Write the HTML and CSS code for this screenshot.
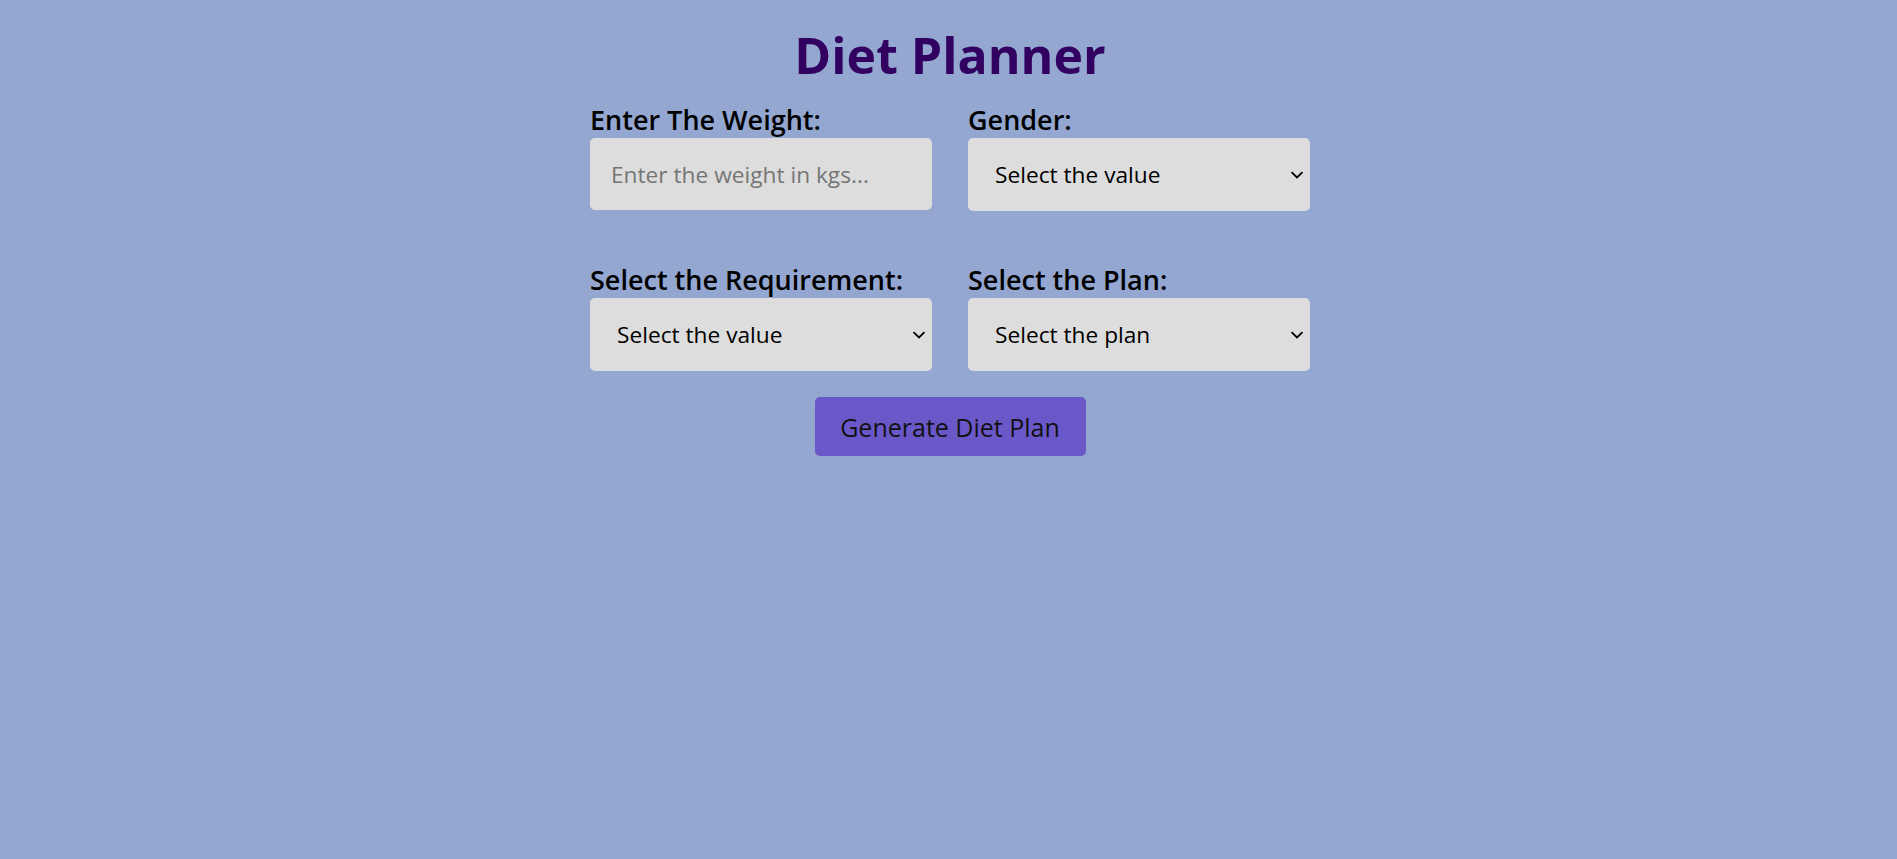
FILE: index.html
```html
<!DOCTYPE html>
<html lang="en">
<head>
<meta charset="utf-8">
<title>Diet Planner</title>
<link rel="stylesheet" href="styles.css">
</head>
<body>
<main class="page">
  <h1 class="title">Diet Planner</h1>
  <form class="form">
    <div class="field">
      <label class="label" for="weight">Enter The Weight:</label>
      <input class="control input" id="weight" type="text" placeholder="Enter the weight in kgs...">
    </div>
    <div class="field">
      <label class="label" for="gender">Gender:</label>
      <div class="select-wrap">
        <select class="control select" id="gender">
          <option>Select the value</option>
        </select>
        <svg class="chevron" width="14" height="8" viewBox="0 0 14 8"><path d="M1.5 1.2 L7 6.5 L12.5 1.2" fill="none" stroke="#000" stroke-width="1.8"/></svg>
      </div>
    </div>
    <div class="field">
      <label class="label" for="req">Select the Requirement:</label>
      <div class="select-wrap">
        <select class="control select" id="req">
          <option>Select the value</option>
        </select>
        <svg class="chevron" width="14" height="8" viewBox="0 0 14 8"><path d="M1.5 1.2 L7 6.5 L12.5 1.2" fill="none" stroke="#000" stroke-width="1.8"/></svg>
      </div>
    </div>
    <div class="field">
      <label class="label" for="plan">Select the Plan:</label>
      <div class="select-wrap">
        <select class="control select" id="plan">
          <option>Select the plan</option>
        </select>
        <svg class="chevron" width="14" height="8" viewBox="0 0 14 8"><path d="M1.5 1.2 L7 6.5 L12.5 1.2" fill="none" stroke="#000" stroke-width="1.8"/></svg>
      </div>
    </div>
    <div class="actions">
      <button class="button" type="button">Generate Diet Plan</button>
    </div>
  </form>
</main>
</body>
</html>
```

FILE: styles.css
```css
html, body {
  margin: 0;
  padding: 0;
  background: #93a7d1;
}

body {
  font-family: "Open Sans", "Noto Sans", sans-serif;
  color: #000;
  padding-left: 3px;
  min-height: 859px;
  box-sizing: border-box;
}

.page {
  width: 720px;
  margin: 0 auto;
  padding-top: 24px;
}

.title {
  margin: 0;
  text-align: center;
  font-size: 50px;
  line-height: 62px;
  font-weight: 700;
  color: #310061;
  height: 82px;
  white-space: nowrap;
}

.form {
  display: grid;
  grid-template-columns: 342px 342px;
  column-gap: 36px;
  row-gap: 55px;
}

.field {
  display: flex;
  flex-direction: column;
}

.label {
  font-size: 27px;
  font-weight: 600;
  line-height: 28px;
  height: 28px;
  margin-bottom: 4px;
  white-space: nowrap;
}

.control {
  box-sizing: border-box;
  width: 100%;
  height: 72px;
  border: none;
  border-radius: 5px;
  background: #dddddd;
  font-family: "Open Sans", "Noto Sans", sans-serif;
  font-size: 22.7px;
  color: #000;
  outline: none;
  margin: 0;
}

.input {
  padding: 0 21px;
}

.input::placeholder {
  color: #757575;
}

.select-wrap {
  position: relative;
}

.select {
  appearance: none;
  -webkit-appearance: none;
  padding: 0 30px 0 27px;
  height: 73px;
}

.chevron {
  position: absolute;
  right: 6px;
  top: 33px;
  pointer-events: none;
}

.actions {
  grid-column: 1 / span 2;
  display: flex;
  justify-content: center;
  margin-top: -29px;
}

.button {
  box-sizing: border-box;
  width: 271px;
  height: 59px;
  border: none;
  border-radius: 5px;
  background: #6a58c9;
  color: #111;
  font-family: "Open Sans", "Noto Sans", sans-serif;
  font-size: 25px;
  padding: 0;
  cursor: pointer;
}
```
